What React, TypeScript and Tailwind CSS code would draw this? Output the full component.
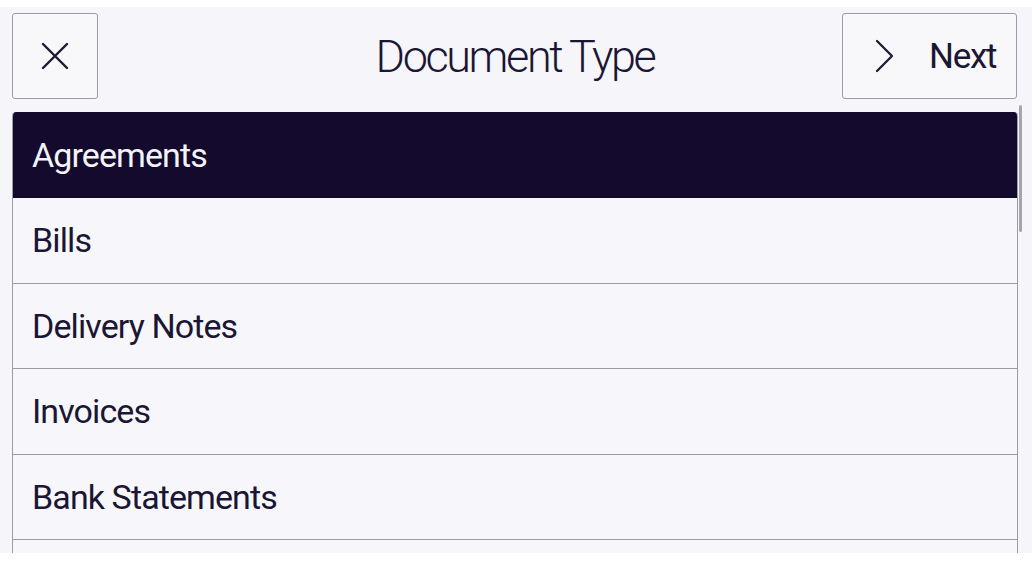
const types = ["Agreements", "Bills", "Delivery Notes", "Invoices", "Bank Statements"];

export default function App() {
  const selected = "Agreements";

  return (
    <div className="h-[566px] w-full bg-white font-['Roboto',sans-serif] text-[#1b1633]">
      <div className="relative mt-[7px] h-[546px] overflow-hidden bg-[#f6f6fa] pl-[12px] pr-[14px] pt-[6px]">
        <header className="grid h-[86px] grid-cols-[1fr_auto_1fr] items-center">
          <button className="flex h-[86px] w-[86px] items-center justify-center justify-self-start rounded-[3px] border border-[#9d9ca6] bg-[#f8f8fb]">
            <svg width="28" height="28" viewBox="0 0 28 28" fill="none" stroke="#1b1633" strokeWidth="2.4" strokeLinecap="round">
              <path d="M2 2 L26 26 M26 2 L2 26" />
            </svg>
          </button>
          <h1 className="text-[45px] font-light leading-none tracking-[-2.4px] text-[#1b1633]">Document Type</h1>
          <button className="mr-[1px] flex h-[86px] w-[175px] items-center justify-self-end rounded-[3px] border border-[#9d9ca6] bg-[#f8f8fb] pl-[32px]">
            <svg width="19" height="34" viewBox="0 0 19 34" fill="none" stroke="#1b1633" strokeWidth="2.2" strokeLinecap="round" strokeLinejoin="round">
              <path d="M2 2 L17 17 L2 32" />
            </svg>
            <span className="ml-[35px] text-[35px] font-normal leading-none tracking-[-1.3px]">Next</span>
          </button>
        </header>

        <div className="relative mt-[13px] h-[460px] overflow-hidden rounded-t-[4px] border-x border-[#9d9ca6]">
          {types.map((t) => {
            const active = t === selected;
            return (
              <div
                key={t}
                className={`flex items-center px-[19px] text-[34px] leading-none tracking-[-0.9px] ${
                  active
                    ? "h-[86px] bg-[#130a2e] text-[#f4f3f8]"
                    : "h-[85.5px] border-b border-[#9d9ca6] bg-[#f7f7fb] text-[#1b1633]"
                }`}
              >
                {t}
              </div>
            );
          })}
          <div className="h-[85.5px] bg-[#f7f7fb]" />
        </div>
        <div className="absolute left-[1019px] top-[98px] h-[127px] w-[3px] rounded-full bg-[#a6a5ae]" />
      </div>
    </div>
  );
}
